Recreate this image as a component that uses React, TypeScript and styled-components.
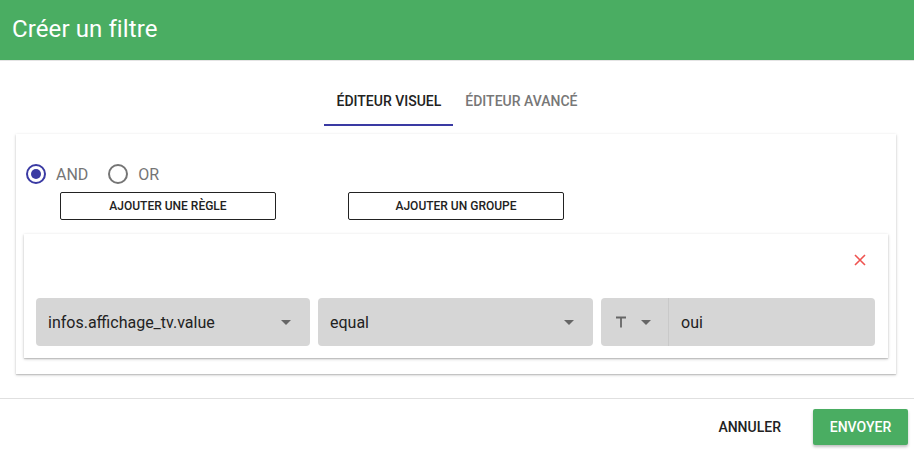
import React, { useState } from 'react';
import styled, { createGlobalStyle } from 'styled-components';

const GREEN = '#4aad62';
const INDIGO = '#3a3aa3';

const GlobalStyle = createGlobalStyle`
  html, body {
    margin: 0;
    padding: 0;
    background: #fff;
    font-family: Roboto, "Liberation Sans", Arial, sans-serif;
  }
  * { box-sizing: border-box; }
`;

const Dialog = styled.div`
  width: 914px;
  height: 452px;
  display: flex;
  flex-direction: column;
  background: #fff;
`;

const Header = styled.header`
  height: 61px;
  background: ${GREEN};
  border-bottom: 1px solid #e4e4e4;
  display: flex;
  align-items: center;
  padding: 0 12px 2px;
`;

const Title = styled.h1`
  margin: 0;
  color: #fff;
  font-size: 24px;
  font-weight: 400;
  letter-spacing: 0.1px;
`;

const Tabs = styled.nav`
  display: flex;
  justify-content: center;
  margin-top: 17px;
`;

const Tab = styled.button<{ $active?: boolean }>`
  height: 48px;
  padding: 0 12px;
  border: none;
  background: none;
  font-family: inherit;
  font-size: 14px;
  font-weight: 500;
  text-transform: uppercase;
  color: ${(p) => (p.$active ? '#222' : '#777')};
  border-bottom: 2px solid ${(p) => (p.$active ? INDIGO : 'transparent')};
  cursor: pointer;
`;

const Panel = styled.section`
  margin: 8px 18px 0 16px;
  height: 240px;
  padding: 30px 8px 16px;
  background: #fff;
  box-shadow: 0 1px 3px rgba(0, 0, 0, 0.2), 0 1px 1px rgba(0, 0, 0, 0.12);
  display: flex;
  flex-direction: column;
`;

const RadioRow = styled.div`
  display: flex;
  align-items: center;
  gap: 20px;
  padding-left: 2px;
`;

const RadioLabel = styled.label`
  display: flex;
  align-items: center;
  gap: 10px;
  font-size: 16px;
  color: #757575;
  cursor: pointer;
`;

const RadioCircle = styled.span<{ $checked?: boolean }>`
  width: 20px;
  height: 20px;
  border-radius: 50%;
  border: 2px solid ${(p) => (p.$checked ? INDIGO : '#757575')};
  display: flex;
  align-items: center;
  justify-content: center;
  &::after {
    content: '';
    width: 10px;
    height: 10px;
    border-radius: 50%;
    background: ${(p) => (p.$checked ? INDIGO : 'transparent')};
  }
`;

const ActionRow = styled.div`
  display: flex;
  gap: 72px;
  margin-top: 8px;
  padding-left: 36px;
`;

const OutlineButton = styled.button`
  width: 216px;
  height: 28px;
  border: 1px solid #222;
  border-radius: 2px;
  background: #fff;
  font-family: inherit;
  font-size: 12px;
  font-weight: 500;
  color: #222;
  text-transform: uppercase;
  cursor: pointer;
`;

const RuleCard = styled.div`
  margin-top: 14px;
  padding: 12px 13px 12px 12px;
  background: #fff;
  box-shadow: 0 1px 3px rgba(0, 0, 0, 0.22), 0 1px 1px rgba(0, 0, 0, 0.12);
  display: flex;
  flex-direction: column;
`;

const RuleTop = styled.div`
  height: 52px;
  display: flex;
  justify-content: flex-end;
  align-items: flex-start;
  padding: 7px 8px 0 0;
`;

const CloseButton = styled.button`
  border: none;
  background: none;
  padding: 0;
  width: 14px;
  height: 14px;
  display: flex;
  cursor: pointer;
`;

const FieldsRow = styled.div`
  display: flex;
  gap: 8px;
`;

const Select = styled.div<{ $width: number }>`
  width: ${(p) => p.$width}px;
  height: 48px;
  background: #d6d6d6;
  border-radius: 4px;
  display: flex;
  align-items: center;
  justify-content: space-between;
  padding: 0 19px 0 12px;
  font-size: 16px;
  color: #222;
`;

const ValueGroup = styled.div`
  flex: 1;
  height: 48px;
  display: flex;
  border-radius: 4px;
  overflow: hidden;
  background: #d6d6d6;
`;

const TypeSelect = styled.div`
  width: 68px;
  display: flex;
  align-items: center;
  gap: 14px;
  padding-left: 14px;
  border-right: 1px solid #c9c9c9;
`;

const ValueInput = styled.div`
  flex: 1;
  display: flex;
  align-items: center;
  padding-left: 12px;
  font-size: 16px;
  color: #222;
`;

const Footer = styled.footer`
  margin-top: 24px;
  border-top: 1px solid #e0e0e0;
  display: flex;
  justify-content: flex-end;
  align-items: center;
  gap: 16px;
  padding: 10px 6px 0 0;
`;

const TextButton = styled.button`
  height: 36px;
  padding: 0 16px;
  border: none;
  background: none;
  font-family: inherit;
  font-size: 14px;
  font-weight: 500;
  color: #222;
  text-transform: uppercase;
  cursor: pointer;
`;

const SubmitButton = styled.button`
  height: 36px;
  width: 95px;
  border: none;
  border-radius: 2px;
  background: ${GREEN};
  color: #fff;
  font-family: inherit;
  font-size: 14px;
  font-weight: 500;
  text-transform: uppercase;
  box-shadow: 0 2px 3px rgba(0, 0, 0, 0.25);
  cursor: pointer;
`;

const Arrow = () => (
  <svg width="10" height="5" viewBox="0 0 10 5">
    <path d="M0 0 L10 0 L5 5 Z" fill="#666" />
  </svg>
);

const TextIcon = () => (
  <svg width="12" height="12" viewBox="0 0 12 12">
    <path d="M1 1.5 H11 M6 1.5 V11.5" stroke="#666" strokeWidth="1.8" fill="none" />
  </svg>
);

const CloseIcon = () => (
  <svg width="14" height="14" viewBox="0 0 14 14">
    <path d="M2 2 L12 12 M12 2 L2 12" stroke="#ef5350" strokeWidth="1.6" fill="none" />
  </svg>
);

export default function App() {
  const [tab, setTab] = useState(0);
  const [conj, setConj] = useState<'AND' | 'OR'>('AND');

  return (
    <Dialog>
      <GlobalStyle />
      <Header>
        <Title>Créer un filtre</Title>
      </Header>
      <Tabs>
        <Tab $active={tab === 0} onClick={() => setTab(0)}>Éditeur visuel</Tab>
        <Tab $active={tab === 1} onClick={() => setTab(1)}>Éditeur avancé</Tab>
      </Tabs>
      <Panel>
        <RadioRow>
          {(['AND', 'OR'] as const).map((c) => (
            <RadioLabel key={c} onClick={() => setConj(c)}>
              <RadioCircle $checked={conj === c} />
              {c}
            </RadioLabel>
          ))}
        </RadioRow>
        <ActionRow>
          <OutlineButton>Ajouter une règle</OutlineButton>
          <OutlineButton>Ajouter un groupe</OutlineButton>
        </ActionRow>
        <RuleCard>
          <RuleTop>
            <CloseButton aria-label="supprimer">
              <CloseIcon />
            </CloseButton>
          </RuleTop>
          <FieldsRow>
            <Select $width={274}>
              infos.affichage_tv.value
              <Arrow />
            </Select>
            <Select $width={275}>
              equal
              <Arrow />
            </Select>
            <ValueGroup>
              <TypeSelect>
                <TextIcon />
                <Arrow />
              </TypeSelect>
              <ValueInput>oui</ValueInput>
            </ValueGroup>
          </FieldsRow>
        </RuleCard>
      </Panel>
      <Footer>
        <TextButton>Annuler</TextButton>
        <SubmitButton>Envoyer</SubmitButton>
      </Footer>
    </Dialog>
  );
}
